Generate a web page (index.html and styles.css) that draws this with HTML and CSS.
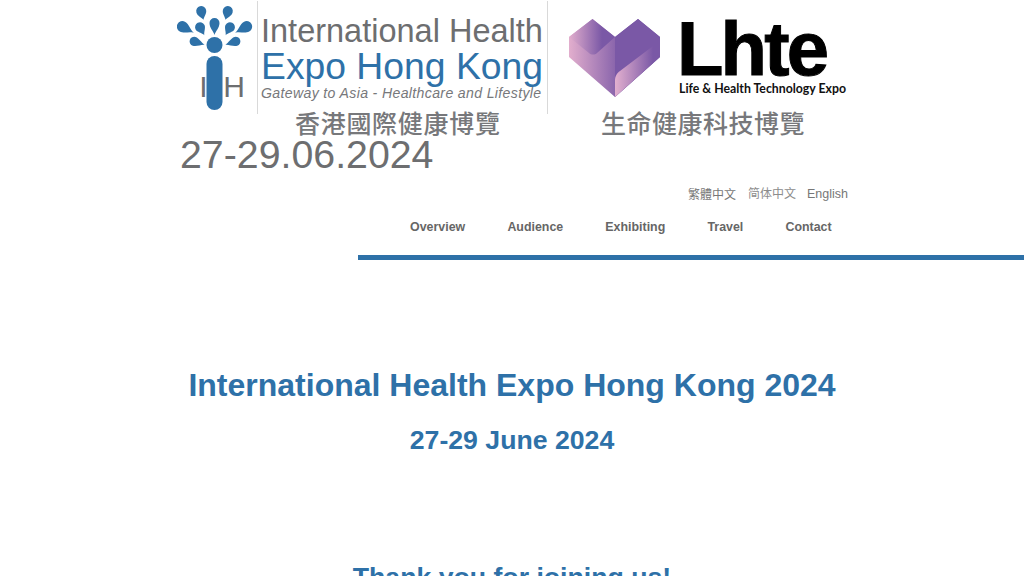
FILE: index.html
```html
<!DOCTYPE html>
<html>
<head>
  <meta charset="UTF-8">
  <title>International Health Expo Hong Kong 2024</title>
  <link rel="stylesheet" href="styles.css">
</head>
<body>
  <header class="site-header">
    <div class="brands">
      <div class="brand-ihe">
        <div class="ihe-logo">
          <svg class="ihe-mark" width="76" height="112" viewBox="0 0 76 112">
            <g fill="#2e71a8">
              <path d="M0 6C-1 3-5 1-5-3A5 5 0 1 1 5-3C5 1 1 3 0 6Z" transform="translate(25 14) rotate(-15)"/>
              <path d="M0 6C-1 3-5 1-5-3A5 5 0 1 1 5-3C5 1 1 3 0 6Z" transform="translate(50 14) rotate(15)"/>
              <path d="M0 10C-1 5-5.500 2-5.500-3A5.500 5.500 0 1 1 5.500-3C5.500 2 1 5 0 10Z" transform="translate(8 28) rotate(-62)"/>
              <path d="M0 10C-1 5-5.500 2-5.500-3A5.500 5.500 0 1 1 5.500-3C5.500 2 1 5 0 10Z" transform="translate(67 28) rotate(62)"/>
              <path d="M0 7C-1 4-5 1-5-2A5 5 0 1 1 5-2C5 1 1 4 0 7Z" transform="translate(24 29) rotate(-28)"/>
              <path d="M0 9C-1 5-5 2-5-3A5 5 0 1 1 5-3C5 2 1 5 0 9Z" transform="translate(37.5 26)"/>
              <path d="M0 7C-1 4-5 1-5-2A5 5 0 1 1 5-2C5 1 1 4 0 7Z" transform="translate(52 29) rotate(28)"/>
              <path d="M0 9C-1 5-4.500 2-4.500-2A4.500 4.500 0 1 1 4.500-2C4.500 2 1 5 0 9Z" transform="translate(19 42) rotate(-72)"/>
              <path d="M0 9C-1 5-4.500 2-4.500-2A4.500 4.500 0 1 1 4.500-2C4.500 2 1 5 0 9Z" transform="translate(57 42) rotate(72)"/>
              <circle cx="37.500" cy="45" r="8"/>
              <rect x="29.500" y="56" width="16" height="54" rx="8"/>
            </g>
            <text class="ihe-mark-text" x="26.500" y="97">I</text>
            <text class="ihe-mark-text" x="57" y="97">H</text>
          </svg>
          <div class="ihe-name">
            <div class="ihe-line1">International Health</div>
            <div class="ihe-line2">Expo Hong Kong</div>
            <div class="ihe-line3">Gateway to Asia - Healthcare and Lifestyle</div>
          </div>
        </div>
        <div class="cn-title ihe-cn">香港國際健康博覽</div>
        <div class="show-date">27-29.06.2024</div>
      </div>

      <div class="brand-lhte">
        <div class="lhte-logo">
          <svg class="lhte-mark" width="92" height="78" viewBox="0 0 92 78">
            <defs>
              <linearGradient id="mainFace" gradientUnits="userSpaceOnUse" x1="0" x2="55" y1="0" y2="0">
                <stop offset="0" stop-color="#e2aecd"/>
                <stop offset="1" stop-color="#7a58a6"/>
              </linearGradient>
              <linearGradient id="topFace" gradientUnits="userSpaceOnUse" x1="0" x2="33" y1="0" y2="0">
                <stop offset="0" stop-color="#e2aecd"/>
                <stop offset="1" stop-color="#7a58a6"/>
              </linearGradient>
              <linearGradient id="foldFace" gradientUnits="userSpaceOnUse" x1="46" x2="84" y1="0" y2="0">
                <stop offset="0" stop-color="#e3b0cf"/>
                <stop offset="1" stop-color="#7a58a6"/>
              </linearGradient>
            </defs>
            <path d="M0 18L23.500 0L46 18L69 0L91 18V38L46 78L0 38Z" fill="url(#mainFace)"/>
            <path d="M46 18L69 0L91 18V38L46 78Z" fill="#7a58a6"/>
            <path d="M0 18L23.500 0L46 18L28 34C26 36 22 36 20 34Z" fill="url(#topFace)"/>
            <path d="M46 78V62C46 57 48 54 51 52L84 27V44Z" fill="url(#foldFace)"/>
          </svg>
          <div class="lhte-name">
            <div class="lhte-word">Lhte</div>
            <div class="lhte-sub">Life &amp; Health Technology Expo</div>
          </div>
        </div>
        <div class="cn-title lhte-cn">生命健康科技博覽</div>
      </div>
    </div>

    <div class="lang-row">
      <a class="lang-cn lang-tc">繁體中文</a>
      <a class="lang-cn lang-sc">简体中文</a>
      <a>English</a>
    </div>

    <nav class="main-nav">
      <a>Overview</a>
      <a>Audience</a>
      <a>Exhibiting</a>
      <a>Travel</a>
      <a>Contact</a>
    </nav>
    <div class="nav-bar"></div>
  </header>

  <main class="intro">
    <h1>International Health Expo Hong Kong 2024</h1>
    <h2>27-29 June 2024</h2>
    <h2 class="thanks">Thank you for joining us!</h2>
  </main>
</body>
</html>
```

FILE: styles.css
```css
body {
  margin: 0;
  background: #fff;
  font-family: "Liberation Sans", Arial, sans-serif;
  color: #666;
}

a {
  color: inherit;
  text-decoration: none;
}

.brands {
  display: flex;
  margin-left: 177px;
  height: 178px;
}

.brand-ihe {
  width: 392px;
}

.ihe-logo {
  display: flex;
  height: 115px;
}

.ihe-mark {
  flex: none;
}

.ihe-mark-text {
  font-size: 30px;
  fill: #6d6e70;
  text-anchor: middle;
}

.ihe-name {
  margin: 1px 0 0 4px;
  width: 291px;
  height: 113px;
  padding-left: 3px;
  border-left: 1px solid #d9d9d9;
  border-right: 1px solid #d9d9d9;
  box-sizing: border-box;
}

.ihe-line1 {
  margin-top: 12px;
  font-size: 32.500px;
  line-height: 36px;
  color: #6d6e70;
  white-space: nowrap;
}

.ihe-line2 {
  font-size: 37.300px;
  line-height: 35px;
  color: #2e71a8;
  white-space: nowrap;
}

.ihe-line3 {
  margin-top: 1px;
  font-size: 14.100px;
  line-height: 16px;
  font-style: italic;
  letter-spacing: 0.35px;
  color: #77787b;
  white-space: nowrap;
}

.cn-title {
  font-family: "Noto Sans CJK TC", sans-serif;
  font-size: 25px;
  font-weight: 500;
  line-height: 32px;
  color: #77787b;
  white-space: nowrap;
}

.ihe-cn {
  margin-left: 118px;
  letter-spacing: 0.7px;
  margin-top: -9px;
}

.show-date {
  margin: -6px 0 0 3px;
  font-size: 39.300px;
  line-height: 44px;
  color: #6d6e70;
  white-space: nowrap;
}

.lhte-logo {
  display: flex;
  height: 106px;
}

.lhte-mark {
  flex: none;
  margin-top: 19px;
}

.lhte-name {
  margin-left: 18px;
}

.lhte-word {
  margin: 16px 0 0 -2px;
  font-size: 76px;
  line-height: 66px;
  font-weight: bold;
  letter-spacing: -2.800px;
  color: #000;
  -webkit-text-stroke: 1px #000;
}

.lhte-sub {
  font-family: "Lato", sans-serif;
  font-size: 12.300px;
  line-height: 14px;
  font-weight: bold;
  color: #111;
  white-space: nowrap;
}

.lhte-cn {
  margin: 0 0 0 32px;
  letter-spacing: 0.5px;
}

.lang-row {
  display: flex;
  justify-content: flex-end;
  gap: 11px;
  margin-right: 176px;
  height: 20px;
  margin-top: 8px;
  font-size: 12.500px;
  line-height: 16px;
  font-family: "Liberation Sans", "Noto Sans CJK TC", sans-serif;
  color: #777;
}

.lang-cn {
  font-size: 12px;
}

.lang-tc {
  margin: 1px 1px 0 0;
}

.lang-sc {
  color: #8c8c8c;
}

.main-nav {
  display: flex;
  margin: 3px 0 0 389px;
  height: 46px;
  font-size: 12.400px;
  line-height: 36px;
  font-weight: bold;
  color: #666;
}

.main-nav a {
  padding: 0 21.100px;
}

.nav-bar {
  margin-left: 358px;
  height: 5px;
  background: #2e71a8;
}

.intro {
  padding-top: 107px;
  text-align: center;
  color: #2e71a8;
}

.intro h1 {
  margin: 0;
  font-size: 32px;
  line-height: 36px;
}

.intro h2 {
  margin: 22px 0 0;
  font-size: 26.670px;
  line-height: 30px;
}

.intro .thanks {
  margin-top: 107px;
  margin-bottom: 40px;
}
```
